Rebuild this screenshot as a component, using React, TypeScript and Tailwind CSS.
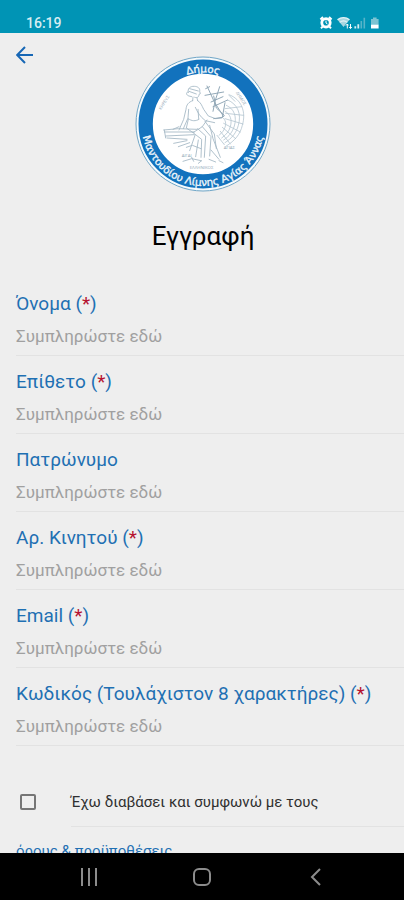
import React from "react";

const FIELDS = [
  { id: "first-name", label: "Όνομα", required: true, type: "text" },
  { id: "last-name", label: "Επίθετο", required: true, type: "text" },
  { id: "father-name", label: "Πατρώνυμο", required: false, type: "text" },
  { id: "mobile", label: "Αρ. Κινητού", required: true, type: "tel" },
  { id: "email", label: "Email", required: true, type: "email" },
  {
    id: "password",
    label: "Κωδικός (Τουλάχιστον 8 χαρακτήρες)",
    required: true,
    type: "password",
  },
];

function StatusBar() {
  return (
    <div className="flex h-[33px] shrink-0 items-end justify-between bg-[#0094b5] pr-6 pl-[26px] text-[#d5edf2]">
      <span className="text-sm leading-5 font-medium">16:19</span>
      <svg width="61" height="14" viewBox="0 0 61 14" fill="none" className="mb-[3px]" aria-hidden="true">
        {/* alarm clock */}
        <circle cx="7" cy="6.8" r="4.2" fill="#0094b5" stroke="#fff" strokeWidth="2.8" />
        <path d="M1.4 3.4 4 1M12.6 3.4 10 1M3.6 10.6l-1.6 1.8M10.4 10.6l1.6 1.8" stroke="#fff" strokeWidth="2" />
        <path d="M7 4.6v2.4l1.5 1" stroke="#fff" strokeWidth="1" />
        {/* wifi */}
        <path d="M18.5 3.8a9.2 9.2 0 0 1 12 0L24.5 11z" fill="#a9d7e1" />
        <path d="M18.5 3.8a9.2 9.2 0 0 1 12 0M20.7 6.4a6 6 0 0 1 7.6 0" stroke="#e2f3f6" strokeWidth="1.2" />
        <path d="M28.3 12.5V8m0 0-1.4 1.6M28.3 8l1.2 1.4M31.5 8v4.5m0 0L30.2 11m1.3 1.5 1.3-1.5" stroke="#fff" strokeWidth="1" />
        {/* signal */}
        <path d="M36.3 12.5v-2.2M39.3 12.5V8.2" stroke="#d5edf2" strokeWidth="1.8" />
        <path d="M42.3 12.5V5M45.3 12.5V1.8" stroke="#57b4c9" strokeWidth="1.6" />
        {/* battery */}
        <path d="M52 3h2V1.4h3.6V3h2v5.5H52z" fill="#7cc4d3" />
        <path d="M52 8.5h7.6v4H52z" fill="#fff" />
      </svg>
    </div>
  );
}

function Seal() {
  return (
    <svg
      viewBox="16 18 408 408"
      className="w-[136px]"
      role="img"
      aria-label="Δήμος Μαντουδίου Λίμνης Αγίας Άννας"
    >
      <defs>
        <path id="seal-top" d="M65 222A155 155 0 0 1 375 222" />
        <path id="seal-bottom" d="M37 205A184 184 0 1 0 403 205" />
      </defs>
      <circle cx="220" cy="222" r="201" fill="#f5fafc" stroke="#6fa5c6" strokeWidth="3" />
      <circle cx="220" cy="222" r="172" fill="#fff" stroke="#1272bd" strokeWidth="43" />
      <g
        fill="#eef6fb"
        stroke="#eef6fb"
        className="font-['DejaVu_Sans','Noto_Sans',sans-serif] text-[31px]"
      >
        <text textAnchor="middle">
          <textPath href="#seal-top" startOffset="50%">Δήμος</textPath>
        </text>
        <text textAnchor="middle">
          <textPath href="#seal-bottom" startOffset="50%">Μαντουδίου Λίμνης Αγίας Άννας</textPath>
        </text>
      </g>
      <g fill="none" stroke="#a3b7c4" strokeWidth="2.6" strokeLinecap="round" strokeLinejoin="round">
        {/* head and hair */}
        <path d="M176 128c-4-12 6-20 18-19 10 0 18 6 16 15l2 7-4 2c0 8-5 12-13 9M174 126c-6 2-4 10 4 12l8 2M180 116l26 7M178 124l22 8M190 141l-1 11M202 144l2 8" />
        {/* torso and arms */}
        <path d="M189 152c-12 4-19 12-20 26l-7 30-14 32M177 178l-2 26-14 32M204 152c10 6 12 14 18 26l14 20 22 8 18-2M197 172c6 14 14 28 30 40l28 6M176 206c10 8 22 8 32 2M205 178l2 28" />
        {/* rock */}
        <path d="M102 240l44-4 56 2M104 246h90M108 258l86-4M112 264l60 4M132 280l40-8M146 290l34-12M104 240l4 24M148 230l-18 8" />
        {/* drapery and legs */}
        <path d="M176 208l-6 26 20 14 28-18 14-20M190 248l26 20-2 54M204 236l24 22-4 64M218 230l26 30-4 58M240 226l10 40 22 56M226 214l28 38 6 44M170 292l18-6 26 10M160 334l26-8 28 6M196 256l-16 46M186 322l6 12M216 332l-10 8M238 328l20 8M268 332l12 6M244 300l24 28M206 270l-8 50" />
      </g>
      <g fill="none" stroke="#93a9b8" strokeWidth="3" strokeLinecap="round">
        {/* lyre */}
        <path d="M232 108l22 48 28 44M270 110l-14 44-6 30M228 116l12-6M226 136l56-10M244 156l36-16M250 170l44-20M252 138l8 36 24 22M286 158l-8 44M252 206l26-4" />
      </g>
      <g fill="none" stroke="#b3c4cf" strokeWidth="2.4" strokeLinecap="round">
        {/* shell */}
        <path d="M298 134c38 14 52 52 40 92-6 26-22 46-48 62M294 150c30 12 42 42 32 76-6 22-18 38-40 52M290 166c24 10 32 34 24 62-6 18-14 30-32 42M286 184c16 8 22 26 16 46-4 14-12 24-26 34M280 204c8 6 10 16 6 28-4 10-8 16-18 24" />
        <path d="M286 176l50-6M288 190l54 6M286 206l54 16M282 220l50 26M278 232l40 34M272 244l30 38M298 136l18 18M262 256l22 28" />
      </g>
      <g fill="#93a9b8" className="font-['Open_Sans','Noto_Sans',sans-serif] text-[13px]">
        <text transform="translate(94 180) rotate(-57)">ΚΗΡΕΥΣ</text>
        <text transform="translate(318 128) rotate(57)">ΔΗΜΟΣ</text>
        <text x="180" y="357">ΕΛΛΗΝΙΚΟΣ</text>
        <text x="156" y="322">ΑΙΓΑΙ</text>
        <text x="282" y="298">ΑΓΙΑΣ</text>
      </g>
    </svg>
  );
}

function NavigationBar() {
  const button = "flex h-full w-[113px] items-center justify-center";
  return (
    <nav aria-label="Σύστημα" className="flex h-[47px] shrink-0 items-center justify-center bg-black text-[#8c8c8c]">
      <button type="button" aria-label="Πρόσφατα" className={button}>
        <svg width="18" height="18" viewBox="0 0 18 18" stroke="currentColor" strokeWidth="2">
          <path d="M2 0v18M9 0v18M16 0v18" />
        </svg>
      </button>
      <button type="button" aria-label="Αρχική" className={button}>
        <svg width="18" height="18" viewBox="0 0 18 18" fill="none" stroke="currentColor" strokeWidth="2">
          <rect x="1" y="1" width="16" height="16" rx="5" />
        </svg>
      </button>
      <button type="button" aria-label="Πίσω" className={button}>
        <svg width="18" height="18" viewBox="0 0 18 18" fill="none" stroke="currentColor" strokeWidth="2">
          <path d="M14 1 6 9l8 8" />
        </svg>
      </button>
    </nav>
  );
}

export default function App() {
  return (
    <div className="flex h-screen flex-col bg-[#eeeeee] font-[Roboto,'Noto_Sans',sans-serif]">
      <StatusBar />
      <main className="min-h-0 flex-1 overflow-y-auto [scrollbar-width:none]">
        <header className="grid grid-cols-[1fr_auto_1fr] pr-[14px] pl-4">
          <button type="button" aria-label="Επιστροφή" className="mt-3 flex size-5 items-center justify-start self-start text-[#1767b5]">
            <svg width="18" height="18" viewBox="0 0 18 18" fill="none" stroke="currentColor" strokeWidth="2">
              <path d="M17 9H1.5M9 1 1.2 9 9 17" />
            </svg>
          </button>
          <div className="pt-[23px]">
            <Seal />
          </div>
        </header>
        <h1 className="mt-7 pr-[14px] pl-4 text-center text-[26px] leading-8 text-black">Εγγραφή</h1>
        <form className="mt-[26px]">
          {FIELDS.map((field) => (
            <div key={field.id} className="ml-4 flex flex-col border-b border-[#e2e2e2] pt-[14px] pb-[7px]">
              <label htmlFor={field.id} className="text-[19px] leading-6 text-[#1f70b3]">
                {field.label}
                {field.required && (
                  <>
                    {" "}(<span className="text-[#b5122f]">*</span>)
                  </>
                )}
              </label>
              <input
                id={field.id}
                type={field.type}
                placeholder="Συμπληρώστε εδώ"
                className="mt-2 h-6 w-full bg-transparent text-[17px] leading-6 text-black outline-none placeholder:text-[#a0a0a0]"
              />
            </div>
          ))}
          <div className="mt-8 flex pl-5">
            <input
              id="terms"
              type="checkbox"
              className="mt-4 size-4 shrink-0 appearance-none rounded-xs border-2 border-[#757575] checked:bg-[#1f70b3]"
            />
            <label htmlFor="terms" className="ml-[35px] flex-1 border-b border-[#e2e2e2] pt-3 pb-3 text-[15px] leading-6 text-[#303030]">
              Έχω διαβάσει και συμφωνώ με τους
            </label>
          </div>
          <a href="#terms" className="mt-3 ml-4 block text-[15px] leading-6 text-[#1f70b3]">
            όρους &amp; προϋποθέσεις
          </a>
        </form>
      </main>
      <NavigationBar />
    </div>
  );
}
